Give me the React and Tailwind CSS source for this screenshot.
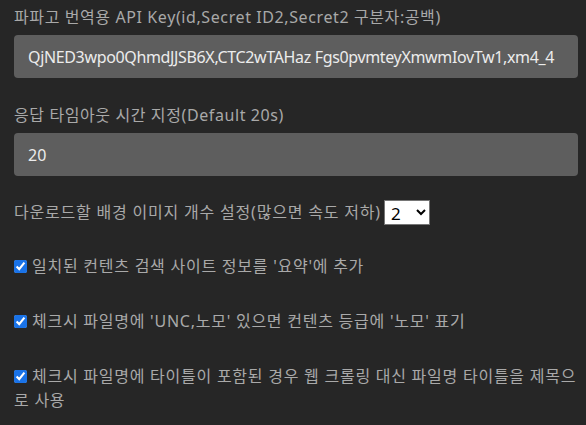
import React, { useState } from 'react';

const font = { fontFamily: '"Noto Sans", "Noto Sans CJK KR", sans-serif' };

const CheckRow = ({ label, defaultChecked = true }) => {
  const [checked, setChecked] = useState(defaultChecked);
  return (
    <label className="block text-[16px] leading-[24px] tracking-[0.75px] text-[#a9a9a9]">
      <input
        type="checkbox"
        checked={checked}
        onChange={(e) => setChecked(e.target.checked)}
        className="mr-[5px] h-[13px] w-[13px] align-[-1px] accent-[#1a73e8]"
      />
      {label}
    </label>
  );
};

export default function App() {
  const [apiKey, setApiKey] = useState('QjNED3wpo0QhmdJJSB6X,CTC2wTAHaz Fgs0pvmteyXmwmIovTw1,xm4_4');
  const [timeout, setTimeoutValue] = useState('20');
  const [count, setCount] = useState('2');

  return (
    <div className="min-h-screen w-full bg-[#262626] pl-[14px] pr-[8px] pt-[5px]" style={font}>
      {/* API key */}
      <div className="text-[16px] leading-[24px] tracking-[0.6px] text-[#a9a9a9]">
        파파고 번역용 API Key(id,Secret ID2,Secret2 구분자:공백)
      </div>
      <input
        value={apiKey}
        onChange={(e) => setApiKey(e.target.value)}
        className="mt-[6px] block h-[43px] w-[564px] rounded-[4px] bg-[#5e5e5e] px-[14px] text-[16px] tracking-[-0.35px] text-[#ececec] outline-none"
      />

      {/* timeout */}
      <div className="mt-[25px] text-[16px] leading-[24px] tracking-[0.6px] text-[#a9a9a9]">
        응답 타임아웃 시간 지정(Default 20s)
      </div>
      <input
        value={timeout}
        onChange={(e) => setTimeoutValue(e.target.value)}
        className="mt-[6px] block h-[43px] w-[564px] rounded-[4px] bg-[#5e5e5e] px-[14px] text-[16px] text-[#ececec] outline-none"
      />

      {/* image count */}
      <div className="mt-[24px] flex h-[24px] items-center text-[16px] tracking-[0.8px] text-[#a9a9a9]">
        <span>다운로드할 배경 이미지 개수 설정(많으면 속도 저하)</span>
        <select
          value={count}
          onChange={(e) => setCount(e.target.value)}
          className="ml-[3px] h-[25px] w-[46px] border border-[#767676] bg-white pl-[2px] text-[17px] tracking-normal text-black"
          style={{ appearance: 'auto' }}
        >
          <option value="1">1</option>
          <option value="2">2</option>
          <option value="3">3</option>
          <option value="4">4</option>
        </select>
      </div>

      {/* options */}
      <div className="mt-[30px] flex flex-col gap-[31px]">
        <CheckRow label="일치된 컨텐츠 검색 사이트 정보를 '요약'에 추가" />
        <CheckRow label="체크시 파일명에 'UNC,노모' 있으면 컨텐츠 등급에 '노모' 표기" />
        <CheckRow label="체크시 파일명에 타이틀이 포함된 경우 웹 크롤링 대신 파일명 타이틀을 제목으로 사용" />
      </div>
    </div>
  );
}
